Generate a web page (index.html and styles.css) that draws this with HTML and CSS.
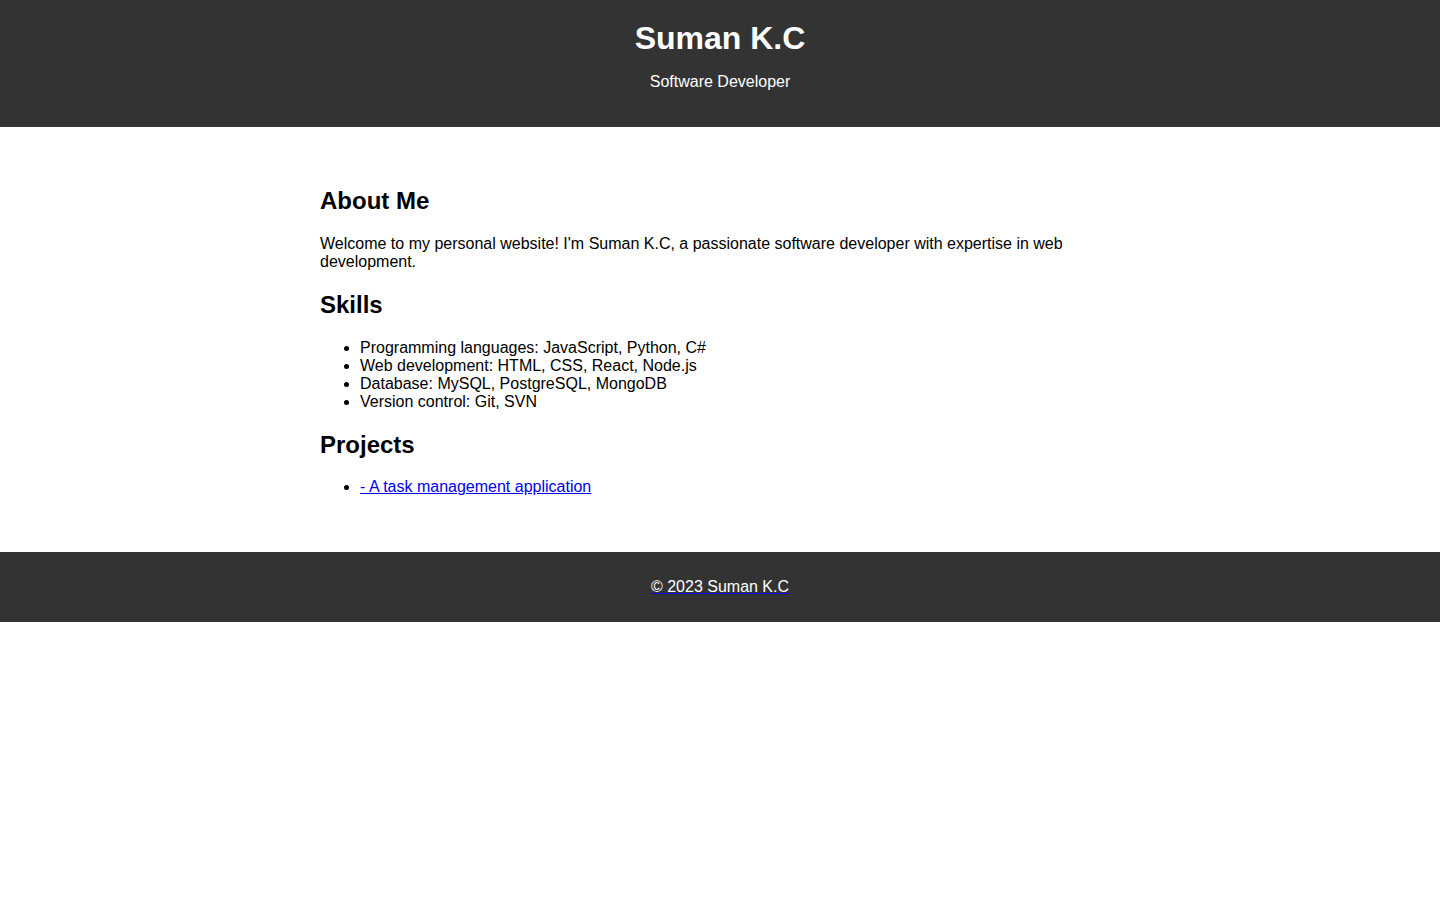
FILE: index.html
```html
<!DOCTYPE html>
<html lang="en">
<head>
<meta charset="utf-8">
<title>Suman K.C</title>
<link rel="stylesheet" href="styles.css">
</head>
<body>
<header class="site-header">
  <h1 class="site-title">Suman K.C</h1>
  <p class="site-subtitle">Software Developer</p>
</header>
<main class="content">
  <section>
    <h2>About Me</h2>
    <p>Welcome to my personal website! I'm Suman K.C, a passionate software developer with expertise in web development.</p>
  </section>
  <section>
    <h2>Skills</h2>
    <ul>
      <li>Programming languages: JavaScript, Python, C#</li>
      <li>Web development: HTML, CSS, React, Node.js</li>
      <li>Database: MySQL, PostgreSQL, MongoDB</li>
      <li>Version control: Git, SVN</li>
    </ul>
  </section>
  <section>
    <h2>Projects</h2>
    <ul>
      <li><a href="#">- A task management application</a></li>
    </ul>
  </section>
</main>
<footer class="site-footer">
  <p><a class="footer-link" href="#">&copy; 2023 Suman K.C</a></p>
</footer>
</body>
</html>
```
FILE: styles.css
```css
body {
  margin: 0;
  font-family: "Liberation Sans", Arial, sans-serif;
  font-size: 16px;
  color: #000;
  background: #fff;
}

.site-header {
  background: #333;
  color: #fff;
  text-align: center;
  padding: 20px;
}

.site-title {
  margin: 0;
  font-size: 32px;
}

.site-subtitle {
  margin: 16px 0 16px;
}

.content {
  width: 800px;
  margin: 20px auto;
  padding: 20px;
}

.content h2 {
  font-size: 24px;
  margin: 19.92px 0;
}

.content p {
  margin: 16px 0;
}

.content ul {
  margin: 16px 0;
  padding-left: 40px;
}

.content a {
  color: #0000ee;
}

.site-footer {
  background: #333;
  color: #fff;
  text-align: center;
  padding: 10px;
}

.site-footer p {
  margin: 16px 0;
}

.footer-link {
  color: #fff;
  text-decoration: underline;
  text-decoration-color: #0000ee;
}
```
